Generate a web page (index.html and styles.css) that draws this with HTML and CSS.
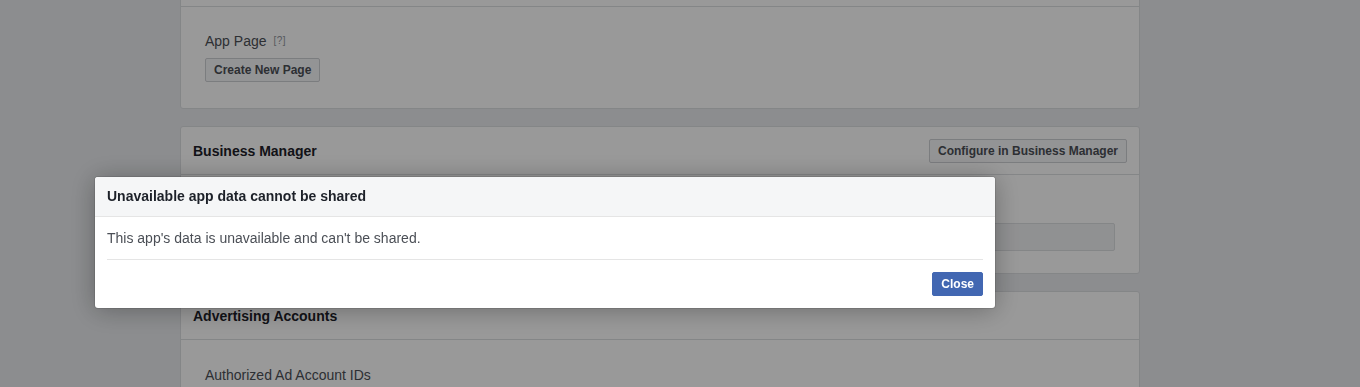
FILE: index.html
```html
<!DOCTYPE html>
<html lang="en">
<head>
<meta charset="utf-8">
<title>App Settings</title>
<link rel="stylesheet" href="styles.css">
</head>
<body>
<div class="page">
  <section class="card">
    <div class="card-head"></div>
    <div class="card-body body-app">
      <div class="label">App Page <span class="help">[?]</span></div>
      <button class="btn">Create New Page</button>
    </div>
  </section>

  <section class="card">
    <div class="card-head">
      <h3 class="card-title">Business Manager</h3>
      <button class="btn">Configure in Business Manager</button>
    </div>
    <div class="card-body body-bm">
      <div class="field"></div>
    </div>
  </section>

  <section class="card">
    <div class="card-head">
      <h3 class="card-title">Advertising Accounts</h3>
    </div>
    <div class="card-body body-ads">
      <div class="label">Authorized Ad Account IDs</div>
      <div class="field"></div>
    </div>
  </section>
</div>

<div class="overlay"></div>

<div class="dialog" role="dialog">
  <div class="dialog-head">Unavailable app data cannot be shared</div>
  <div class="dialog-body">This app's data is unavailable and can't be shared.</div>
  <div class="dialog-foot">
    <button class="btn btn-primary">Close</button>
  </div>
</div>
</body>
</html>
```

FILE: styles.css
```css
* { box-sizing: border-box; }

html, body {
  margin: 0;
  height: 100%;
  overflow: hidden;
}

body {
  background: #e9ebee;
  font-family: "Liberation Sans", Arial, Helvetica, sans-serif;
  color: #4b4f56;
}

.page {
  width: 960px;
  margin: -42px 0 0 180px;
  display: flex;
  flex-direction: column;
  gap: 17px;
}

.card {
  background: #fff;
  border: 1px solid #dddfe2;
  border-radius: 3px;
}

.card-head {
  height: 48px;
  border-bottom: 1px solid #dddfe2;
  padding: 0 12px;
  display: flex;
  align-items: center;
  justify-content: space-between;
}

.card-title {
  margin: 0;
  font-size: 14px;
  font-weight: bold;
  color: #1d2129;
  line-height: 18px;
}

.card-body {
  padding: 24px;
}

.body-app { padding: 24px 24px 26px; }
.body-bm { padding: 48px 24px 22px; }
.body-ads { padding: 25px 24px 24px; }

.label {
  font-size: 14px;
  line-height: 20px;
  color: #4b4f56;
}

.help {
  font-size: 10px;
  color: #90949c;
  margin-left: 3px;
  vertical-align: 2px;
  letter-spacing: 0.5px;
}

.body-app .label { margin-bottom: 7px; }
.body-ads .label { margin-bottom: 6px; }

.btn {
  font-family: inherit;
  font-size: 12px;
  font-weight: bold;
  line-height: 22px;
  height: 24px;
  padding: 0 8px;
  color: #4b4f56;
  background: #f6f7f9;
  border: 1px solid #ced0d4;
  border-radius: 2px;
  cursor: pointer;
}

.field {
  height: 28px;
  background: #f1f2f4;
  border: 1px solid #dddfe2;
  border-radius: 2px;
}

.overlay {
  position: fixed;
  inset: 0;
  background: rgba(0, 0, 0, 0.4);
}

.dialog {
  position: fixed;
  top: 177px;
  left: 95px;
  width: 900px;
  background: #fff;
  border-radius: 3px;
  box-shadow: 0 2px 26px rgba(0, 0, 0, 0.3), 0 0 0 1px rgba(0, 0, 0, 0.1);
  overflow: hidden;
}

.dialog-head {
  background: #f5f6f7;
  border-bottom: 1px solid #e5e5e5;
  padding: 10px 12px;
  font-size: 14px;
  line-height: 19px;
  font-weight: bold;
  color: #1d2129;
}

.dialog-body {
  padding: 12px;
  font-size: 14px;
  line-height: 18px;
  color: #4b4f56;
}

.dialog-foot {
  margin: 0 12px;
  border-top: 1px solid #e5e5e5;
  padding: 12px 0;
  display: flex;
  justify-content: flex-end;
}

.btn-primary {
  background: #4267b2;
  border-color: #4267b2;
  color: #fff;
}
```
